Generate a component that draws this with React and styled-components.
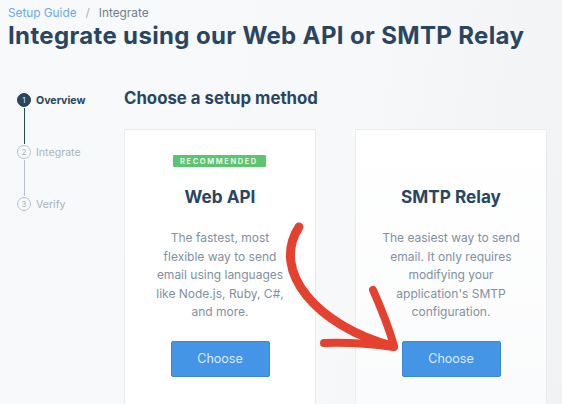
import React from "react";
import styled, { createGlobalStyle } from "styled-components";

const GlobalStyle = createGlobalStyle`
  html, body {
    margin: 0;
    padding: 0;
    background: #f7f8f9;
    overflow: hidden;
  }
  body {
    font-family: Inter, "Noto Sans", "Liberation Sans", sans-serif;
    -webkit-font-smoothing: antialiased;
  }
`;

const Page = styled.div`
  position: relative;
  width: 562px;
  height: 404px;
  overflow: hidden;
  background: linear-gradient(100deg, #f8f9fa 0%, #f7f8f9 60%, #f1f2f4 100%);
  padding: 4px 0 0 8px;
  box-sizing: border-box;
`;

const Breadcrumb = styled.div`
  display: flex;
  align-items: center;
  gap: 8px;
  font-size: 11.8px;
  line-height: 18px;
  color: #6f7f90;
`;

const Crumb = styled.span`
  color: ${(p) => (p.$link ? "#6aa9ec" : "#6f7f90")};
`;

const Slash = styled.span`
  color: #a8b3bf;
  margin: 0 1px;
`;

const Title = styled.h1`
  margin: -1px 0 0;
  font-size: 24px;
  line-height: 30px;
  font-weight: 700;
  color: #294661;
  letter-spacing: 0.35px;
  white-space: nowrap;
`;

const Body = styled.div`
  display: grid;
  grid-template-columns: 116px 1fr;
  margin-top: 37px;
`;

const Steps = styled.ol`
  list-style: none;
  margin: 0;
  padding: 5px 0 0 9px;
  display: flex;
  flex-direction: column;
`;

const Step = styled.li`
  position: relative;
  display: flex;
  align-items: center;
  gap: 5px;
  height: 14px;
  margin-bottom: 38px;
  font-size: 10.6px;
  font-weight: ${(p) => (p.$active ? 700 : 400)};
  color: ${(p) => (p.$active ? "#294661" : "#a9b4c0")};

  &:not(:last-child)::after {
    content: "";
    position: absolute;
    left: 6.5px;
    top: 15px;
    width: 1px;
    height: 36px;
    background: ${(p) => (p.$active ? "#294661" : "#b9c2cc")};
  }
`;

const Dot = styled.span`
  width: 14px;
  height: 14px;
  box-sizing: border-box;
  border-radius: 50%;
  display: flex;
  align-items: center;
  justify-content: center;
  font-size: 8px;
  font-weight: 400;
  background: ${(p) => (p.$active ? "#294661" : "transparent")};
  border: 1px solid ${(p) => (p.$active ? "#294661" : "#b9c2cc")};
  color: ${(p) => (p.$active ? "#dfe6ee" : "#a9b4c0")};
`;

const Main = styled.div`
  display: flex;
  flex-direction: column;
`;

const Heading = styled.h2`
  margin: 0;
  font-size: 16.8px;
  line-height: 20px;
  font-weight: 700;
  color: #294661;
`;

const Cards = styled.div`
  display: flex;
  gap: 39px;
  margin-top: 21px;
`;

const Card = styled.div`
  width: 192px;
  height: 300px;
  box-sizing: border-box;
  background: ${(p) =>
    p.$fade ? "linear-gradient(180deg, #ffffff 0%, #fafbfc 100%)" : "#ffffff"};
  border: 1px solid #e9ecef;
  display: flex;
  flex-direction: column;
  align-items: center;
  padding-top: 25px;
`;

const Badge = styled.span`
  visibility: ${(p) => (p.$hidden ? "hidden" : "visible")};
  height: 12px;
  width: 93px;
  margin-left: -2px;
  display: flex;
  align-items: center;
  justify-content: center;
  background: #5dc56f;
  border-radius: 1px;
  color: #f2fbf3;
  font-size: 7.5px;
  font-weight: 600;
  letter-spacing: 1.6px;
`;

const CardTitle = styled.h3`
  margin: 18px 0 0;
  font-size: 17.2px;
  line-height: 24px;
  font-weight: 700;
  color: #294661;
`;

const Desc = styled.p`
  margin: 20px 0 0;
  font-size: 12px;
  line-height: 18.5px;
  color: #7f90a3;
  text-align: center;
  white-space: nowrap;
`;

const Button = styled.button`
  margin-top: 19px;
  width: 99px;
  height: 36px;
  background: #4595e6;
  border: 1px solid #3a86d8;
  border-radius: 2px;
  color: #dcebfb;
  font-family: inherit;
  font-size: 12.5px;
`;

const Arrow = styled.svg`
  position: absolute;
  left: 0;
  top: 0;
  pointer-events: none;
`;

const methods = [
  {
    title: "Web API",
    recommended: true,
    lines: [
      "The fastest, most",
      "flexible way to send",
      "email using languages",
      "like Node.js, Ruby, C#,",
      "and more.",
    ],
  },
  {
    title: "SMTP Relay",
    recommended: false,
    lines: [
      "The easiest way to send",
      "email. It only requires",
      "modifying your",
      "application's SMTP",
      "configuration.",
    ],
  },
];

const steps = ["Overview", "Integrate", "Verify"];

export default function App() {
  return (
    <Page>
      <GlobalStyle />
      <Breadcrumb>
        <Crumb $link>Setup Guide</Crumb>
        <Slash>/</Slash>
        <Crumb>Integrate</Crumb>
      </Breadcrumb>
      <Title>Integrate using our Web API or SMTP Relay</Title>
      <Body>
        <Steps>
          {steps.map((s, i) => (
            <Step key={s} $active={i === 0}>
              <Dot $active={i === 0}>{i + 1}</Dot>
              {s}
            </Step>
          ))}
        </Steps>
        <Main>
          <Heading>Choose a setup method</Heading>
          <Cards>
            {methods.map((m) => (
              <Card key={m.title} $fade={!m.recommended}>
                <Badge $hidden={!m.recommended}>RECOMMENDED</Badge>
                <CardTitle>{m.title}</CardTitle>
                <Desc>
                  {m.lines.map((l, i) => (
                    <React.Fragment key={i}>
                      {l}
                      {i < m.lines.length - 1 && <br />}
                    </React.Fragment>
                  ))}
                </Desc>
                <Button>Choose</Button>
              </Card>
            ))}
          </Cards>
        </Main>
      </Body>
      <Arrow width="562" height="404" viewBox="0 0 562 404">
        <g fill="none" stroke="#e5412f" strokeLinecap="round" strokeLinejoin="round">
          <path d="M299 227 C 270 272, 318 326, 392 346" strokeWidth="9" />
          <path d="M373 290 C 381 308, 389 328, 394 346" strokeWidth="8" />
          <path d="M324 343 C 348 342, 372 344, 394 347" strokeWidth="8" />
        </g>
      </Arrow>
    </Page>
  );
}
